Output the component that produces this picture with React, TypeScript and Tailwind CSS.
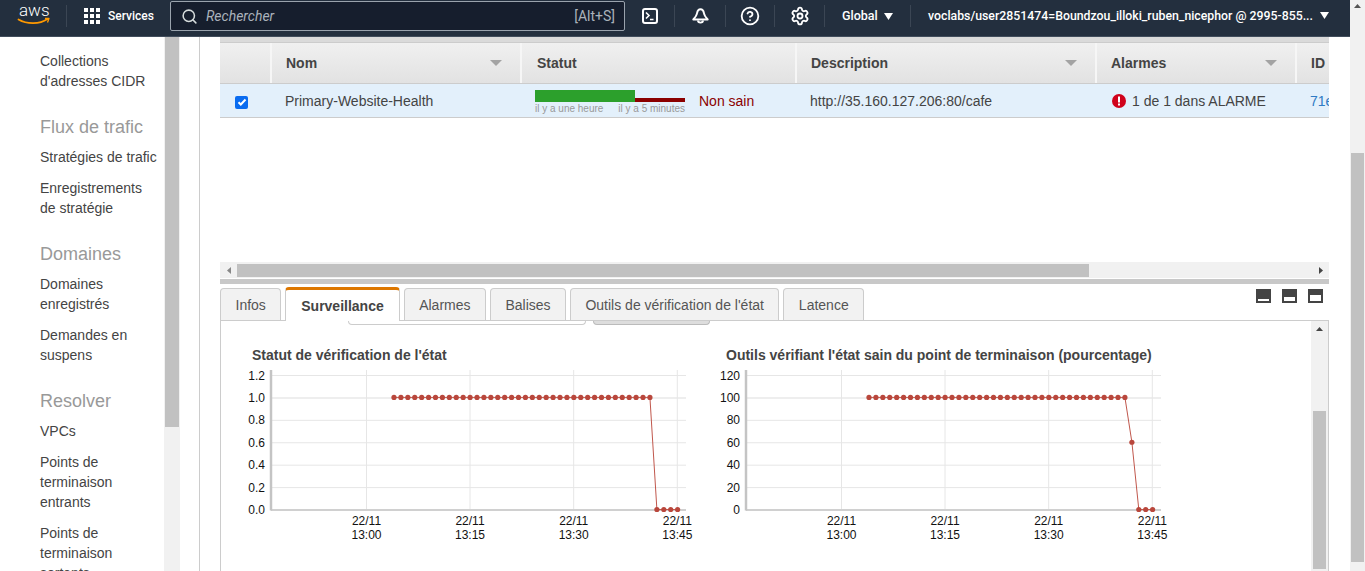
import { CircleHelp, Settings, Search } from "lucide-react";

const FONT = "font-['Liberation_Sans',Arial,sans-serif]";

const Tri = ({ dir = "down", w = 9, h = 6, fill = "#fff" }: { dir?: "down" | "up" | "left" | "right"; w?: number; h?: number; fill?: string }) => {
  const pts = { down: "0,0 10,0 5,10", up: "0,10 10,10 5,0", left: "10,0 10,10 0,5", right: "0,0 0,10 10,5" }[dir];
  return (
    <svg width={w} height={h} viewBox="0 0 10 10" preserveAspectRatio="none" className="block shrink-0">
      <polygon points={pts} fill={fill} />
    </svg>
  );
};

const TopIcon = ({ w, children }: { w: string; children: React.ReactNode }) => (
  <div className={`${w} flex items-center justify-center`}>{children}</div>
);

const Sep = () => <div className="h-[22px] w-px shrink-0 bg-[#3b4654]" />;

const Header = () => (
  <header className="flex h-[37px] w-[1350px] shrink-0 items-center border-b border-[#414d5c] bg-[#232f3e] pb-[4px] font-['Roboto',sans-serif] text-xs text-white">
    <div className="flex w-[66px] justify-end pr-[16px]">
      <svg width="32" height="20" viewBox="0 0 32 20" fill="none" className="overflow-visible">
        <path d="M.5 13.500c8.500 5 21 5 29-.5" stroke="#f90" strokeWidth="1.800" strokeLinecap="round" />
        <path d="M27 12.500h4l-1.500 4" stroke="#f90" strokeWidth="1.300" strokeLinejoin="round" />
        <text x="1" y="9.500" fontFamily="Roboto, sans-serif" fontWeight="300" fontSize="17" fill="#fff">aws</text>
      </svg>
    </div>
    <Sep />
    <div className="ml-[17px] grid h-4 w-4 grid-cols-3 gap-[1.500px]">
      {Array.from({ length: 9 }).map((_, i) => (
        <span key={i} className="bg-white" />
      ))}
    </div>
    <span className="ml-2 w-[45px] whitespace-nowrap font-medium">Services</span>
    <div className="ml-[17px] flex h-[30px] w-[455px] shrink-0 items-center rounded-[2px] border border-[#9aa3ad] bg-[#161e2d] pl-[10px] pr-[9px] text-sm text-[#aab2bb]">
      <Search size={17} strokeWidth={2.200} className="text-[#d5dbdb]" />
      <span className="ml-[8px] italic">Rechercher</span>
      <span className="ml-auto">[Alt+S]</span>
    </div>
    <TopIcon w="w-[49px]">
      <svg width="16" height="16" viewBox="0 0 16 16" fill="none" stroke="#fff" strokeWidth="2">
        <rect x="1" y="1" width="14" height="14" rx="2" />
        <path d="M4 4.500l3 3-3 3M8 11.500h3.500" strokeWidth="1.600" />
      </svg>
    </TopIcon>
    <Sep />
    <TopIcon w="w-[50px]">
      <svg width="17" height="17" viewBox="0 0 17 17" fill="none" stroke="#fff" strokeWidth="1.900" strokeLinejoin="round">
        <path d="M8.500 1.200c-2.400 0-3.100 1.900-3.400 3.800-.3 2.300-1.500 3.900-3.800 6.500h14.400C13.400 8.900 12.200 7.300 11.900 5c-.3-1.900-1-3.800-3.400-3.800z" />
        <path d="M6 12.500c0 2.800 5 2.800 5 0" />
      </svg>
    </TopIcon>
    <Sep />
    <TopIcon w="w-[48px]">
      <CircleHelp size={20} strokeWidth={2.200} />
    </TopIcon>
    <Sep />
    <TopIcon w="w-[49px]">
      <Settings size={20} strokeWidth={2.200} />
    </TopIcon>
    <Sep />
    <div className="flex w-[85px] items-center gap-[6px] pl-[17px] text-[12.500px] font-medium">
      Global <Tri w={9} h={7} />
    </div>
    <Sep />
    <div className="ml-[17px] flex items-center gap-[7px] whitespace-nowrap text-[12.300px] font-medium">
      voclabs/user2851474=Boundzou_illoki_ruben_nicephor @ 2995-855... <Tri w={9} h={7} />
    </div>
  </header>
);

const NavItem = ({ label }: { label: string }) => <a className="mb-[11px] block leading-5 text-[#444]">{label}</a>;
const NavTitle = ({ label }: { label: string }) => (
  <h3 className="mb-[10px] mt-[26px] text-lg leading-5 text-[#999]">{label}</h3>
);

const Sidebar = () => (
  <aside className="flex h-full shrink-0">
    <nav className="w-[164px] overflow-hidden pl-10 pr-1 pt-[14px] text-sm">
      <NavItem label="Collections d'adresses CIDR" />
      <NavTitle label="Flux de trafic" />
      <NavItem label="Stratégies de trafic" />
      <NavItem label="Enregistrements de stratégie" />
      <NavTitle label="Domaines" />
      <NavItem label="Domaines enregistrés" />
      <NavItem label="Demandes en suspens" />
      <NavTitle label="Resolver" />
      <NavItem label="VPCs" />
      <NavItem label="Points de terminaison entrants" />
      <NavItem label="Points de terminaison sortants" />
    </nav>
    <div className="w-4 bg-[#f1f1f1] px-px">
      <div className="h-[390px] bg-[#c1c1c1]" />
    </div>
  </aside>
);

const headers = [
  { label: "Nom", cls: "w-[250px] pl-[14px]", sortable: true },
  { label: "Statut", cls: "w-[275px] pl-[15px]", sortable: false },
  { label: "Description", cls: "w-[300px] pl-[14px]", sortable: true },
  { label: "Alarmes", cls: "w-[200px] pl-[14px]", sortable: true },
];

const ResourceTable = () => (
  <div className="h-[225px] shrink-0 overflow-hidden">
    <div className="h-[6px] border-b border-[#ccc] bg-[#dadada]" />
    <div className="flex h-[41px] w-[1200px] border-b border-[#ccc] bg-linear-to-b from-[#f0f0f0] to-[#e2e2e2] font-bold text-[#444]">
      <div className="w-[52px] shrink-0 border-r-2 border-[#f6f6f6]" />
      {headers.map((h) => (
        <div key={h.label} className={`${h.cls} flex shrink-0 items-center border-r-2 border-[#f6f6f6] pr-[18px]`}>
          {h.label}
          {h.sortable && (
            <span className="ml-auto">
              <Tri w={12} h={6} fill="#a3a3a3" />
            </span>
          )}
        </div>
      ))}
      <div className="flex items-center pl-[14px]">ID</div>
    </div>
    <div className="flex h-[34px] w-[1200px] items-center border-b border-[#ccc] bg-[#e3f0fb] text-[#444]">
      <div className="flex w-[51px] shrink-0 pl-[15px] pt-[3px]">
        <span className="flex h-[13px] w-[13px] items-center justify-center rounded-[2px] bg-[#0a6cf0]">
          <svg width="10" height="10" viewBox="0 0 10 10" fill="none" stroke="#fff" strokeWidth="2">
            <path d="M1.500 5.200l2.300 2.300 4.700-5" />
          </svg>
        </span>
      </div>
      <div className="w-[250px] shrink-0 pl-[14px]">Primary-Website-Health</div>
      <div className="flex h-full w-[275px] shrink-0 items-center pl-[14px]">
        <div className="h-full w-[150px] pt-[6px]">
          <div className="flex h-3 items-end">
            <span className="h-3 w-[100px] bg-[#2ca02c]" />
            <span className="h-1 w-[50px] bg-[#8b0000]" />
          </div>
          <div className="mt-px flex justify-between whitespace-nowrap text-[10px] leading-3 text-[#999]">
            <span>il y a une heure</span>
            <span>il y a 5 minutes</span>
          </div>
        </div>
        <span className="ml-[14px] text-[#8b0000]">Non sain</span>
      </div>
      <div className="w-[300px] shrink-0 pl-[14px]">http://35.160.127.206:80/cafe</div>
      <div className="flex w-[200px] shrink-0 items-center gap-[6px] pl-[16px]">
        <svg width="14" height="14" viewBox="0 0 14 14">
          <circle cx="7" cy="7" r="7" fill="#d0021b" />
          <rect x="6" y="2.500" width="2" height="6" fill="#fff" />
          <rect x="6" y="9.500" width="2" height="2" fill="#fff" />
        </svg>
        1 de 1 dans ALARME
      </div>
      <div className="pl-[14px] text-[#2f7bc4]">71e</div>
    </div>
  </div>
);

const HScroll = () => (
  <div className="flex h-4 shrink-0 items-center bg-[#f1f1f1]">
    <span className="flex w-[17px] justify-center">
      <Tri dir="left" w={4} h={7} fill="#888" />
    </span>
    <div className="h-[13px] w-[852px] bg-[#c1c1c1]" />
    <span className="ml-auto flex w-4 justify-center">
      <Tri dir="right" w={4} h={7} fill="#444" />
    </span>
  </div>
);

const tabs = ["Infos", "Surveillance", "Alarmes", "Balises", "Outils de vérification de l'état", "Latence"];

const LayoutIcon = ({ h }: { h: string }) => (
  <span className="flex h-[14px] w-[15px] items-end bg-[#444] px-[2px] pb-[2px]">
    <span className={`${h} w-full bg-white`} />
  </span>
);

const Tabs = () => (
  <div className="relative flex h-[36px] shrink-0 items-end">
    <div className="flex items-end gap-[3.900px]">
      {tabs.map((t) =>
        t === "Surveillance" ? (
          <div
            key={t}
            className="relative z-10 -mb-px flex h-[34px] items-center rounded-t-[4px] border-x border-t-[3px] border-x-[#ccc] border-t-[#dd7700] bg-white px-[15px] font-bold text-[#444]"
          >
            {t}
          </div>
        ) : (
          <div
            key={t}
            className="flex h-[32px] items-center rounded-t-[4px] border border-b-0 border-[#ccc] bg-[#f2f2f2] px-[14.500px] text-[#555]"
          >
            {t}
          </div>
        ),
      )}
    </div>
    <div className="mb-[17px] ml-auto flex gap-[11px] pr-[6px]">
      <LayoutIcon h="h-[2px]" />
      <LayoutIcon h="h-[4px]" />
      <LayoutIcon h="h-[6px]" />
    </div>
  </div>
);

type ChartProps = { yLabels: string[]; values: [number, number][] };

const xTicks = [
  { x: 95.500, t: "13:00" },
  { x: 199, t: "13:15" },
  { x: 302.700, t: "13:30" },
  { x: 406.300, t: "13:45" },
];

// 38 points at 1.0 then the drop, same sampling on both charts
const flat = Array.from({ length: 38 }, (_, i): [number, number] => [123 + i * 6.917, 1]);

const Chart = ({ yLabels, values }: ChartProps) => {
  const y = (i: number) => 5 + i * 22.42;
  const yv = (v: number) => y(6) - (v / 1.2) * (y(6) - y(0));
  const line = values.map(([x, v]) => `${x},${yv(v)}`).join(" ");
  return (
    <svg width="460" height="180" viewBox="0 0 460 180" className="block overflow-visible">
      {yLabels.map((l, i) => (
        <g key={l}>
          <line x1="0" x2="415" y1={y(i) + 0.5} y2={y(i) + 0.5} stroke={i === 1 ? "#eee" : "#e6e6e6"} strokeWidth={i === 1 ? 2 : 1} />
          <text x="-6" y={y(i) + 4.500} textAnchor="end" fontSize="12" fill="#111">
            {l}
          </text>
        </g>
      ))}
      {xTicks.map((t) => (
        <g key={t.t}>
          <line x1={t.x} x2={t.x} y1="0" y2={y(6)} stroke="#e6e6e6" />
          <text x={t.x} y="155" textAnchor="middle" fontSize="12" fill="#111">
            22/11
          </text>
          <text x={t.x} y="169" textAnchor="middle" fontSize="12" fill="#111">
            {t.t}
          </text>
        </g>
      ))}
      <line x1="0" x2="415" y1={y(6) + 0.5} y2={y(6) + 0.5} stroke="#d0d0d0" strokeWidth="2" />
      <line x1="0" x2="0" y1="0" y2={y(6) + 1} stroke="#c4c4c4" strokeWidth="2.500" />
      <polyline points={line} fill="none" stroke="#c0574c" strokeWidth="1" />
      {values.map(([x, v]) => (
        <circle key={x} cx={x} cy={yv(v)} r="2.600" fill="#b9473c" />
      ))}
    </svg>
  );
};

const ChartBlock = ({ title, titlePad, yLabels, values }: ChartProps & { title: string; titlePad: string }) => (
  <div className="w-[475px] shrink-0">
    <h4 className={`${titlePad} whitespace-nowrap text-sm font-bold leading-[15px] text-[#444]`}>{title}</h4>
    <div className="ml-[50px] mt-[7px]">
      <Chart yLabels={yLabels} values={values} />
    </div>
  </div>
);

const MonitorPanel = () => (
  <div className="flex min-h-0 flex-1 border-x border-t border-[#ccc]">
    <div className="min-w-0 flex-1 overflow-hidden">
      <div className="ml-[127px] flex h-1 gap-[7px]">
        <div className="w-[238px] rounded-b-[4px] border border-t-0 border-[#ccc] bg-white" />
        <div className="w-[117px] rounded-b-[4px] border border-t-0 border-[#bbb] bg-[#ddd]" />
      </div>
      <div className="flex pt-[23px]">
        <ChartBlock
          title="Statut de vérification de l'état"
          titlePad="pl-[31px]"
          yLabels={["1.2", "1.0", "0.8", "0.6", "0.4", "0.2", "0.0"]}
          values={[...flat, [385.900, 0], [392.800, 0], [399.700, 0], [406.600, 0]]}
        />
        <ChartBlock
          title="Outils vérifiant l'état sain du point de terminaison (pourcentage)"
          titlePad="pl-[30px]"
          yLabels={["120", "100", "80", "60", "40", "20", "0"]}
          values={[...flat, [385.900, 0.6], [392.800, 0], [399.700, 0], [406.600, 0]]}
        />
      </div>
    </div>
    <div className="w-[17px] shrink-0 bg-[#f1f1f1] px-[2px]">
      <div className="flex h-[90px] justify-center pt-[6px]">
        <Tri dir="up" w={7} h={4} fill="#444" />
      </div>
      <div className="h-[158px] bg-[#c1c1c1]" />
    </div>
  </div>
);

const PageScrollbar = () => (
  <div className="w-[15px] shrink-0 bg-[#f1f1f1] px-px">
    <div className="flex h-[153px] justify-center pt-[4px]">
      <Tri dir="up" w={7} h={4} fill="#555" />
    </div>
    <div className="h-[409px] bg-[#c1c1c1]" />
  </div>
);

export default function App() {
  return (
    <div className={`${FONT} flex h-[571px] w-[1365px] overflow-hidden bg-white text-sm`}>
      <div className="flex w-[1350px] flex-col">
        <Header />
        <div className="flex min-h-0 flex-1">
          <Sidebar />
          <div className="ml-[19px] mr-[20px] w-px bg-[#ccc]" />
          <main className="flex w-[1109px] min-w-0 flex-col">
            <ResourceTable />
            <HScroll />
            <div className="mt-px h-[5px] shrink-0 bg-[#c8c8c8]" />
            <Tabs />
            <MonitorPanel />
          </main>
        </div>
      </div>
      <PageScrollbar />
    </div>
  );
}
